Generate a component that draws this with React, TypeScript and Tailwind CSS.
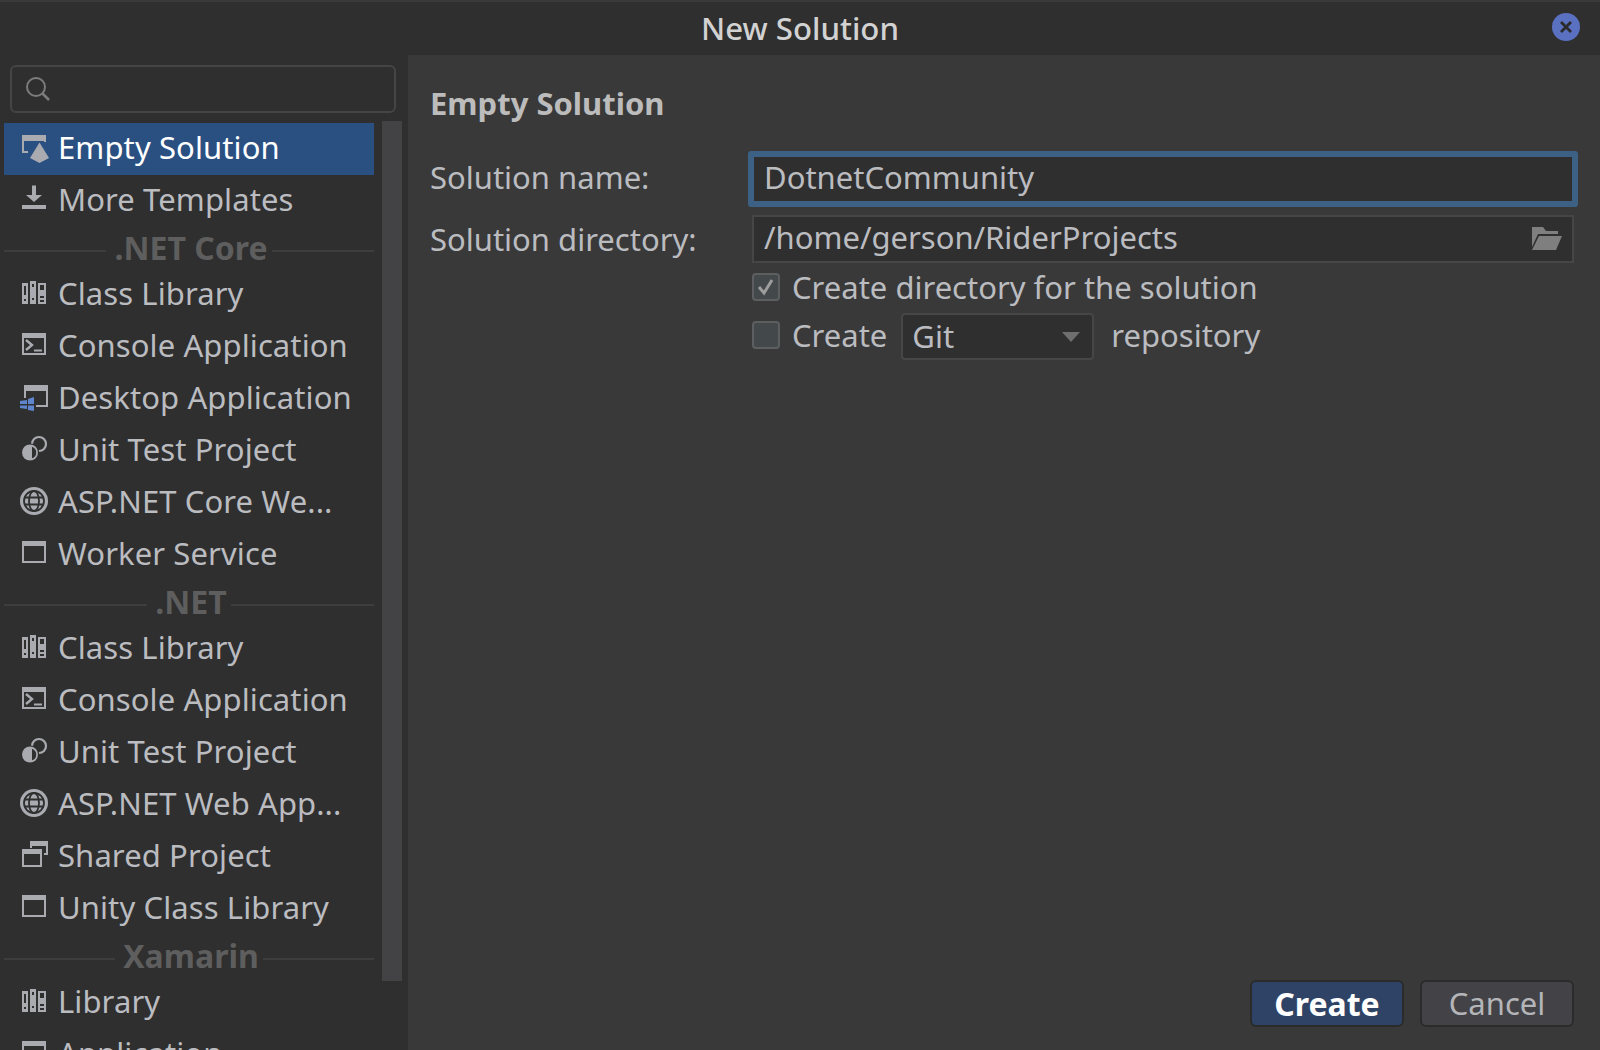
import type { ReactNode } from "react"

const font = "font-['Noto_Sans','Open_Sans',sans-serif]"

function Icon({ children }: { children: ReactNode }) {
  return (
    <svg viewBox="0 0 28 28" className="w-7 h-7 shrink-0 overflow-visible text-[#a9abb0]" fill="currentColor">
      {children}
    </svg>
  )
}

const EmptyIcon = () => (
  <Icon>
    <path d="M2 2h24v7h-2V8H4v10h4v2H2z" />
    <path d="M19.500 9.500L10 25l9.500 5L29 25z" />
  </Icon>
)
const DownloadIcon = () => (
  <Icon>
    <path d="M12 .500h4V10h6l-8 7-8-7h6z" />
    <path d="M2 20h24v4H2z" />
  </Icon>
)
const LibraryIcon = () => (
  <Icon>
    <path
      fillRule="evenodd"
      d="M2 4h6v21H2zM4 7v9h2V7zM4 20v2h2v-2zM10 2h6v23h-6zM12 5v3h2V5zM12 19v2h2v-2zM18 4h8v21h-8zM20 6v5h4V6zM20 17v2h4v-2zM20 21v2h4v-2z"
    />
  </Icon>
)
const ConsoleIcon = () => (
  <Icon>
    <path fillRule="evenodd" d="M2 2h24v22H2zM4 7v15h20V7z" />
    <path d="M6 9l6 5-6 5" fill="none" stroke="currentColor" strokeWidth="2.400" />
    <path d="M14 18.500h8v2h-8z" />
  </Icon>
)
const DesktopIcon = () => (
  <Icon>
    <path d="M4 2h24v22H16v-2h10V8H6v7H4z" />
    <path d="M0 18l7-1v4H0zM8 16l6-2v7H8zM0 22.500h7V26l-7-1zM8 22.500h6V28l-6-1z" fill="#5f85cf" />
  </Icon>
)
const TestIcon = () => (
  <Icon>
    <circle cx="19" cy="9" r="7" fill="none" stroke="currentColor" strokeWidth="2.200" />
    <circle cx="10" cy="17.500" r="9.200" fill="#2f2f2f" />
    <circle cx="10" cy="17.500" r="8" />
    <path d="M12 11.640A6.200 6.200 0 0 1 12 23.360z" fill="#2f2f2f" />
  </Icon>
)
const GlobeIcon = () => (
  <Icon>
    <circle cx="14" cy="14" r="14" />
    <g fill="none" stroke="#2f2f2f" strokeWidth="1.800">
      <circle cx="14" cy="14" r="10" />
      <ellipse cx="14" cy="14" rx="5" ry="10" />
      <path d="M4 10.500h20M4 17.500h20" />
    </g>
  </Icon>
)
const WindowIcon = () => (
  <Icon>
    <path fillRule="evenodd" d="M2 2h24v22H2zM4 7v15h20V7z" />
  </Icon>
)
const SharedIcon = () => (
  <Icon>
    <path fillRule="evenodd" d="M2 8h20v18H2zM4 13v11h16V13z" />
    <path d="M10 0h18v14h-4v-2h2V5H12v2h-2z" />
  </Icon>
)

function Row({ icon, label, active }: { icon: ReactNode; label: string; active?: boolean }) {
  return (
    <div
      className={`h-[52px] shrink-0 flex items-center gap-2.5 pl-4 pb-1 ${
        active ? "bg-[#2a5082] text-white" : "text-[#bbbcc0]"
      }`}
    >
      {icon}
      <span className="text-[31px] leading-none tracking-[0.1px] whitespace-nowrap">{label}</span>
    </div>
  )
}

function Separator({ label }: { label: string }) {
  return (
    <div className="h-[42px] shrink-0 flex items-center gap-1">
      <div className="flex-1 h-0.5 mt-1.5 bg-[#3d3d3d]" />
      <span className="ml-1 text-[32px] leading-none font-bold text-[#5e5e5e]">{label}</span>
      <div className="flex-1 h-0.5 mt-1.5 bg-[#3d3d3d]" />
    </div>
  )
}

export default function App() {
  return (
    <div className={`w-[1600px] h-[1050px] overflow-hidden flex flex-col bg-[#2f2f2f] ${font}`}>
      <div className="h-[55px] shrink-0 flex items-center justify-center relative border-t-2 border-[#3a3a3a]">
        <span className="text-[31.2px] leading-none font-medium text-[#d2d2d2]">New Solution</span>
        <div className="absolute right-5 top-[11px] w-7 h-7 rounded-full bg-[#5a70c0] flex items-center justify-center">
          <svg viewBox="0 0 14 14" className="w-3.5 h-3.5" fill="none" stroke="#2b2b2b" strokeWidth="2.800">
            <path d="M2 2l10 10M12 2L2 12" />
          </svg>
        </div>
      </div>

      <div className="flex-1 min-h-0 flex">
        <div className="w-[408px] shrink-0 flex flex-col overflow-hidden">
          <div className="ml-2.5 mr-3 mt-2.5 h-12 shrink-0 border-2 border-[#454545] rounded-md flex items-center pl-[13px]">
            <svg viewBox="0 0 26 26" className="w-[26px] h-[26px]" fill="none" stroke="#7c7c7c" strokeWidth="2">
              <circle cx="11" cy="11" r="9" />
              <path d="M17.500 17.500l6.500 6.500" strokeWidth="2.500" />
            </svg>
          </div>
          <div className="flex pt-2.5 flex-1 min-h-0">
            <div className="w-[370px] ml-1 shrink-0 flex flex-col">
              <Row active icon={<EmptyIcon />} label="Empty Solution" />
              <Row icon={<DownloadIcon />} label="More Templates" />
              <Separator label=".NET Core" />
              <Row icon={<LibraryIcon />} label="Class Library" />
              <Row icon={<ConsoleIcon />} label="Console Application" />
              <Row icon={<DesktopIcon />} label="Desktop Application" />
              <Row icon={<TestIcon />} label="Unit Test Project" />
              <Row icon={<GlobeIcon />} label="ASP.NET Core We..." />
              <Row icon={<WindowIcon />} label="Worker Service" />
              <Separator label=".NET" />
              <Row icon={<LibraryIcon />} label="Class Library" />
              <Row icon={<ConsoleIcon />} label="Console Application" />
              <Row icon={<TestIcon />} label="Unit Test Project" />
              <Row icon={<GlobeIcon />} label="ASP.NET Web App..." />
              <Row icon={<SharedIcon />} label="Shared Project" />
              <Row icon={<WindowIcon />} label="Unity Class Library" />
              <Separator label="Xamarin" />
              <Row icon={<LibraryIcon />} label="Library" />
              <Row icon={<WindowIcon />} label="Application" />
            </div>
            <div className="w-5 ml-2 h-[860px] -mt-0.5 shrink-0 bg-[#434346]" />
          </div>
        </div>

        <div className="flex-1 bg-[#393939] flex flex-col pl-[22px] pr-[22px] pb-[23px] text-[#bbbcc0]">
          <div className="mt-[28px] text-[31px] leading-[40px] font-bold text-[#bcbcbc]">Empty Solution</div>
          <div className="mt-[28px] flex items-center">
            <div className="w-[318px] mb-1 text-[31px] leading-none">Solution name:</div>
            <div className="flex-1 h-14 border-[6px] border-[#3d6185] rounded-[3px] bg-[#2f2f2f] flex items-center pl-2.5 text-[31px] leading-none">
              <span className="mb-1">DotnetCommunity</span>
            </div>
          </div>
          <div className="mt-2 flex items-center">
            <div className="w-[322px] text-[31px] leading-none">Solution directory:</div>
            <div className="flex-1 mr-1 h-12 border-2 border-[#464646] bg-[#2f2f2f] flex items-center justify-between pl-2.5 pr-2.5 text-[31px] leading-none">
              <span className="mb-1">/home/gerson/RiderProjects</span>
              <svg viewBox="0 0 30 24" className="w-[30px] h-6" fill="#7f7f7f">
                <path d="M0 0h11l3 4h12v3H6L0 20z" />
                <path d="M7 9h23l-6 14H0z" />
              </svg>
            </div>
          </div>
          <div className="ml-[322px] mt-2.5 flex items-center h-7 gap-3">
            <div className="w-7 h-7 rounded border-2 border-[#5c5e5f] bg-[#43494a] flex items-center justify-center">
              <svg viewBox="0 0 20 20" className="w-5 h-5" fill="none" stroke="#9d9d9d" strokeWidth="3">
                <path d="M3 10l5 6 8-13" />
              </svg>
            </div>
            <span className="text-[31px] leading-none">Create directory for the solution</span>
          </div>
          <div className="ml-[322px] mt-[12px] flex items-center h-[47px] gap-3">
            <div className="w-7 h-7 -mt-1 rounded border-2 border-[#5c5e5f] bg-[#43494a]" />
            <span className="-mt-0.5 text-[31px] leading-none">Create</span>
            <div className="ml-0.5 w-[193px] h-[47px] rounded border-2 border-[#464646] bg-[#2f2f2f] flex items-center justify-between pl-[9px] pr-3 text-[31px] leading-none">
              Git
              <svg viewBox="0 0 18 10" className="w-[18px] h-2.5" fill="#6f6f6f">
                <path d="M0 0h18l-9 10z" />
              </svg>
            </div>
            <span className="ml-[5px] -mt-0.5 text-[31px] leading-none">repository</span>
          </div>

          <div className="mt-auto flex justify-end gap-4 pr-1">
            <button className="w-[154px] h-[47px] rounded-md border-2 border-[#2b2b2b] bg-[#2f4366] text-white text-[32px] leading-none font-bold">
              Create
            </button>
            <button className="w-[154px] h-[47px] rounded-md border-2 border-[#2b2b2b] bg-[#434347] text-[#b4b5b9] text-[31px] leading-none">
              Cancel
            </button>
          </div>
        </div>
      </div>
    </div>
  )
}
